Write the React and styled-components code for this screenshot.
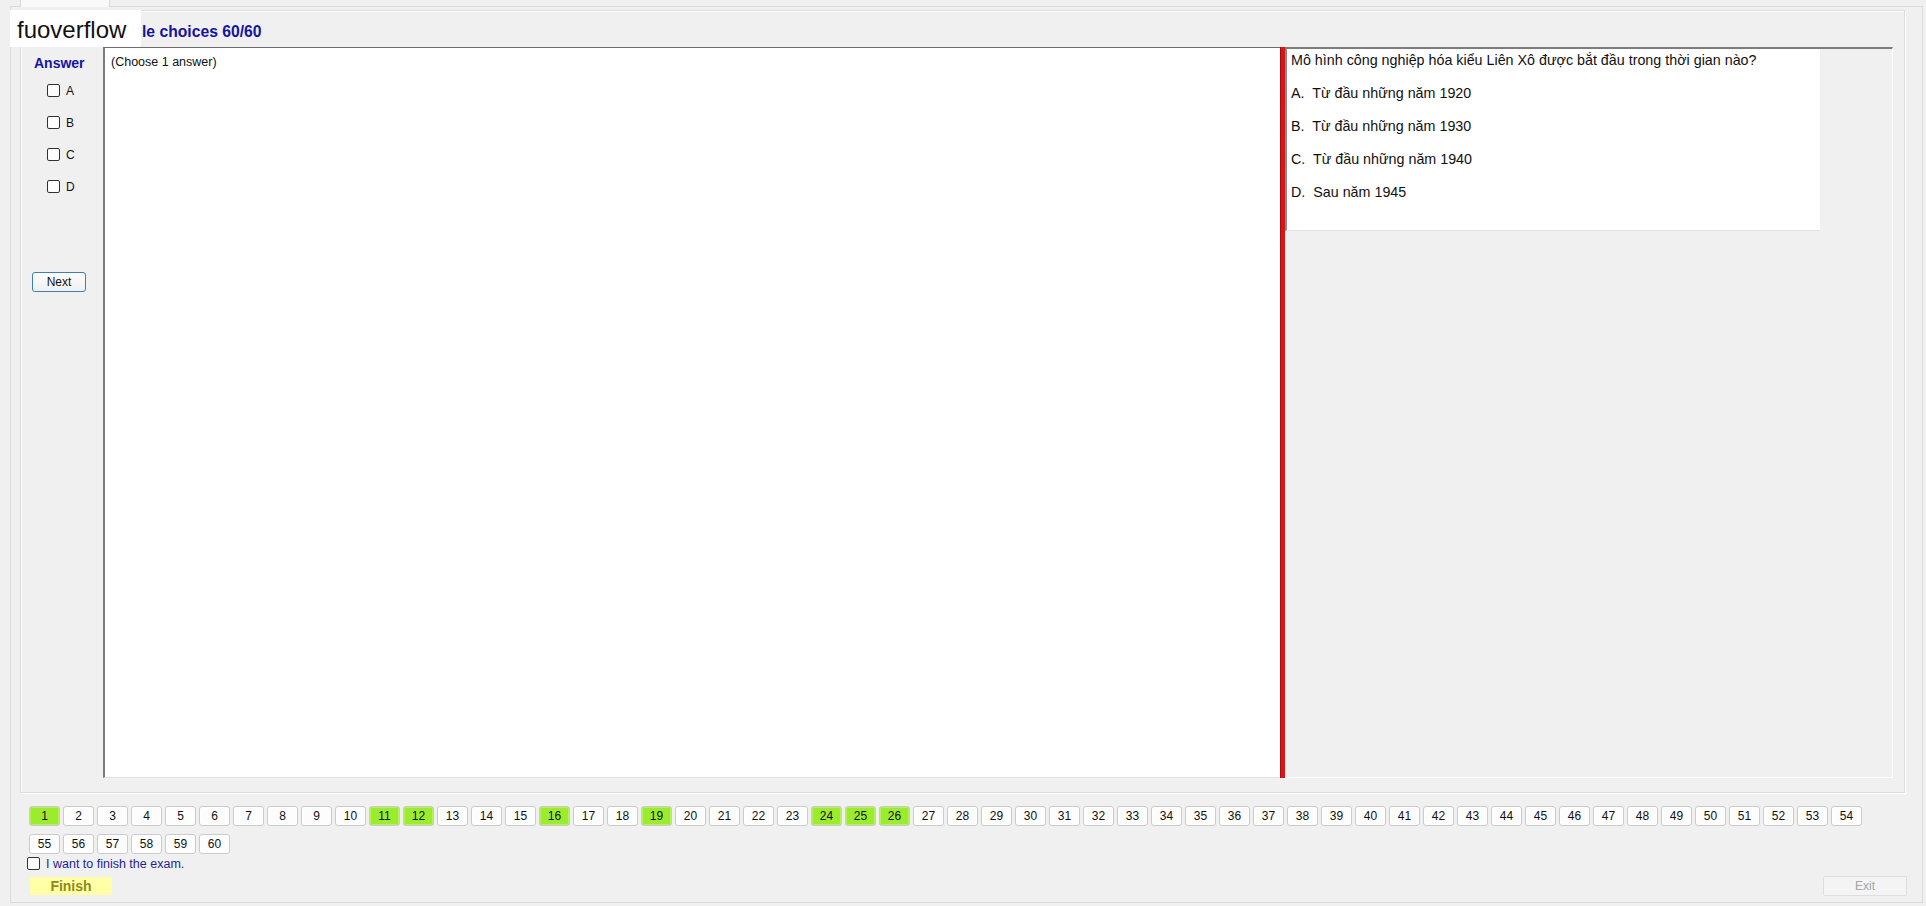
import React from "react";
import styled, { createGlobalStyle } from "styled-components";

const GlobalStyle = createGlobalStyle`
  html, body {
    margin: 0;
    padding: 0;
    background: #f0f0f0;
  }
  body {
    font-family: "Liberation Sans", Arial, sans-serif;
    overflow: hidden;
  }
`;

const Window = styled.div`
  position: relative;
  width: 1926px;
  height: 906px;
  background: #f0f0f0;
  overflow: hidden;
`;

const Logo = styled.div`
  position: absolute;
  left: 10px;
  top: 10px;
  width: 131px;
  height: 37px;
  box-sizing: border-box;
  padding: 6px 0 0 7px;
  background: #fff;
  color: #111;
  font-size: 24px;
  line-height: 28px;
  z-index: 2;
`;

const TabStrip = styled.div`
  height: 6px;
  padding-left: 20px;
  display: flex;
`;

const Tab = styled.div`
  width: 90px;
  height: 7px;
  box-sizing: border-box;
  background: #f9f9f9;
  border-left: 1px solid #d9d9d9;
  border-right: 1px solid #d9d9d9;
  position: relative;
  z-index: 1;
`;

const TabPage = styled.div`
  margin-left: 10px;
  width: 1913px;
  height: 897px;
  box-sizing: border-box;
  border: 1px solid #dadada;
  background: #f0f0f0;
  display: flex;
  flex-direction: column;
`;

const GroupBox = styled.div`
  margin: 3px 0 0 9px;
  width: 1885px;
  height: 783px;
  box-sizing: border-box;
  border: 1px solid #dcdcdc;
  box-shadow: inset 1px 1px 0 #fff, 1px 1px 0 #fff;
  display: flex;
  flex-direction: column;
`;

const TitleRow = styled.div`
  height: 36px;
  box-sizing: border-box;
  padding: 12px 0 0 121px;
  display: flex;
  align-items: flex-start;
`;

const Title = styled.div`
  white-space: nowrap;
  color: #1414a0;
  font-size: 15.7px;
  font-weight: bold;
  line-height: 18px;
`;

const Body = styled.div`
  display: flex;
  height: 731px;
`;

const AnswerPanel = styled.div`
  width: 82px;
  box-sizing: border-box;
  padding-top: 8px;
  display: flex;
  flex-direction: column;
`;

const AnswerTitle = styled.div`
  padding-left: 13px;
  color: #1414a8;
  font-size: 14px;
  font-weight: bold;
  line-height: 16px;
`;

const OptionList = styled.div`
  margin: 13px 0 0 26px;
  display: flex;
  flex-direction: column;
  gap: 19px;
`;

const OptionRow = styled.label`
  display: flex;
  align-items: center;
  height: 13px;
  font-size: 12px;
  color: #111;
  gap: 6px;
`;

const Check = styled.input.attrs({ type: "checkbox" })`
  appearance: none;
  margin: 0;
  width: 13px;
  height: 13px;
  box-sizing: border-box;
  border: 1px solid #333;
  border-radius: 2px;
  background: #fff;
`;

const NextButton = styled.button`
  margin: 79px 0 0 11px;
  width: 54px;
  height: 20px;
  box-sizing: border-box;
  border: 1px solid #3c7fb1;
  border-radius: 3px;
  background: linear-gradient(#fdfdfd, #f0f0f0);
  font-family: "Liberation Sans", Arial, sans-serif;
  font-size: 12px;
  color: #111;
  padding: 0;
`;

const MainPanel = styled.div`
  width: 1790px;
  display: flex;
`;

const LeftText = styled.div`
  width: 1177px;
  box-sizing: border-box;
  background: #fff;
  border-top: 1px solid #6d6d6d;
  border-left: 2px solid #7c7c7c;
  border-bottom: 1px solid #e3e3e3;
  padding: 7px 0 0 6px;
  font-size: 12.5px;
  line-height: 14px;
  color: #111;
`;

const Splitter = styled.div`
  width: 5px;
  background: #d81616;
  box-shadow: inset 1px 0 0 #a80c0c;
`;

const RightPane = styled.div`
  flex: 1;
  box-sizing: border-box;
  border-top: 2px solid #7c7c7c;
  border-right: 1px solid #fff;
  border-bottom: 1px solid #fff;
  background: #f0f0f0;
`;

const QuestionBox = styled.div`
  width: 535px;
  height: 182px;
  box-sizing: border-box;
  background: #fff;
  border-left: 2px solid #8a8a8a;
  border-bottom: 1px solid #e0e0e0;
  padding: 3px 0 0 4px;
  font-size: 14.3px;
  line-height: 16px;
  color: #111;
`;

const QLine = styled.div`
  white-space: pre;
  margin-top: ${(p) => (p.first ? 0 : 17)}px;
`;

const NavGrid = styled.div`
  margin: 13px 0 0 18px;
  display: grid;
  grid-template-columns: repeat(54, 31px);
  column-gap: 3px;
  row-gap: 8px;
`;

const NavButton = styled.div`
  height: 20px;
  box-sizing: border-box;
  border: 1px solid #cbcbcb;
  border-radius: 3px;
  background: ${(p) => (p.done ? "#9cec2e" : "#fdfdfd")};
  box-shadow: inset 0 0 0 1px ${(p) => (p.done ? "#b8f060" : "#fff")};
  display: flex;
  align-items: center;
  justify-content: center;
  font-size: 12px;
  color: #111;
`;

const FinishCheck = styled.label`
  margin: 3px 0 0 16px;
  display: flex;
  align-items: center;
  gap: 6px;
  height: 13px;
  color: #1f1f96;
  font-size: 12.5px;
`;

const BottomRow = styled.div`
  margin-top: 6px;
  display: flex;
  justify-content: space-between;
  align-items: flex-start;
  padding: 0 15px 0 19px;
`;

const FinishButton = styled.div`
  margin-top: 1px;
  width: 82px;
  height: 18px;
  background: #ffffa6;
  color: #8c8c16;
  font-size: 14px;
  font-weight: bold;
  display: flex;
  align-items: center;
  justify-content: center;
`;

const ExitButton = styled.div`
  width: 84px;
  height: 20px;
  box-sizing: border-box;
  border: 1px solid #dedede;
  border-radius: 2px;
  background: #f4f4f4;
  color: #a5a5a5;
  font-size: 12px;
  display: flex;
  align-items: center;
  justify-content: center;
`;

const answered = [1, 11, 12, 16, 19, 24, 25, 26];
const options = [
  "A.  Từ đầu những năm 1920",
  "B.  Từ đầu những năm 1930",
  "C.  Từ đầu những năm 1940",
  "D.  Sau năm 1945",
];

export default function App() {
  return (
    <>
      <GlobalStyle />
      <Window>
        <Logo>fuoverflow</Logo>
        <TabStrip>
          <Tab />
        </TabStrip>
        <TabPage>
          <GroupBox>
            <TitleRow>
              <Title>le choices 60/60</Title>
            </TitleRow>
            <Body>
              <AnswerPanel>
                <AnswerTitle>Answer</AnswerTitle>
                <OptionList>
                  {["A", "B", "C", "D"].map((l) => (
                    <OptionRow key={l}>
                      <Check />
                      {l}
                    </OptionRow>
                  ))}
                </OptionList>
                <NextButton>Next</NextButton>
              </AnswerPanel>
              <MainPanel>
                <LeftText>(Choose 1 answer)</LeftText>
                <Splitter />
                <RightPane>
                  <QuestionBox>
                    <QLine first>
                      Mô hình công nghiệp hóa kiểu Liên Xô được bắt đầu trong thời gian nào?
                    </QLine>
                    {options.map((o) => (
                      <QLine key={o}>{o}</QLine>
                    ))}
                  </QuestionBox>
                </RightPane>
              </MainPanel>
            </Body>
          </GroupBox>
          <NavGrid>
            {Array.from({ length: 60 }, (_, i) => i + 1).map((n) => (
              <NavButton key={n} done={answered.includes(n)}>
                {n}
              </NavButton>
            ))}
          </NavGrid>
          <FinishCheck>
            <Check />I want to finish the exam.
          </FinishCheck>
          <BottomRow>
            <FinishButton>Finish</FinishButton>
            <ExitButton>Exit</ExitButton>
          </BottomRow>
        </TabPage>
      </Window>
    </>
  );
}
